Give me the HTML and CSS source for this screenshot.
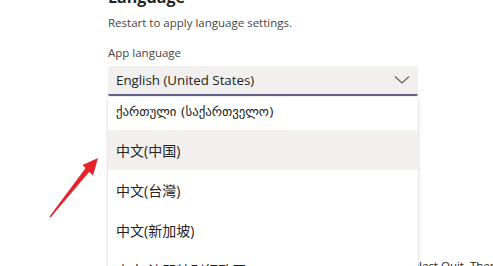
FILE: index.html
```html
<!DOCTYPE html>
<html>
<head>
<meta charset="utf-8">
<link rel="stylesheet" href="styles.css">
</head>
<body>
<div class="page">
  <h2 class="heading">Language</h2>
  <p class="hint">Restart to apply language settings.</p>
  <label class="label">App language</label>
  <div class="field">
    <div class="select">
      <span class="value">English (United States)</span>
      <svg class="chevron" width="16" height="16" viewBox="0 0 16 16"><path d="M1 4.5 L8 11 L15 4.5" fill="none" stroke="#605e5c" stroke-width="1.1"/></svg>
    </div>
    <div class="menu">
      <div class="menu-inner">
        <div class="opt geo">ქართული (საქართველო)</div>
        <div class="opt sel">中文(中国)</div>
        <div class="opt">中文(台灣)</div>
        <div class="opt">中文(新加坡)</div>
        <div class="opt">中文(澳門特別行政區)</div>
      </div>
    </div>
  </div>
  <p class="note"><span class="hidden-part">To restart, right-click the Teams icon in the taskbar, se</span>lect Quit. Then reopen Teams.</p>
</div>
<svg class="arrow" width="110" height="230" viewBox="0 0 110 230">
  <polygon points="49.5,216.5 50.5,217.5 90,171 86,167.5" fill="#e3242b"/>
  <polygon points="98,158 82.5,165 93,175.5" fill="#e3242b"/>
</svg>
</body>
</html>
```
FILE: styles.css
```css
html, body {
  margin: 0;
  padding: 0;
  background: #ffffff;
  overflow: hidden;
  height: 266px;
}
body {
  font-family: "Open Sans", "Noto Sans", sans-serif;
  color: #252423;
}
.page {
  padding-left: 108px;
  width: 385px;
  margin-top: -13px;
}
.heading {
  margin: 0;
  font-size: 16px;
  font-weight: 700;
  line-height: 20px;
}
.hint {
  margin: 8px 0 0;
  font-size: 11.5px;
  line-height: 16px;
  color: #484644;
}
.label {
  display: block;
  margin-top: 14px;
  font-size: 11.5px;
  line-height: 16px;
  color: #484644;
}
.field {
  position: relative;
  margin-top: 5px;
  width: 310px;
}
.select {
  box-sizing: border-box;
  height: 30px;
  background: #f1f0ef;
  border-bottom: 2px solid #63618a;
  border-radius: 3px 3px 2px 2px;
  display: flex;
  align-items: center;
  justify-content: space-between;
  padding: 0 8px 0 8px;
}
.value {
  font-size: 13.3px;
  line-height: 20px;
  color: #252423;
}
.menu {
  position: absolute;
  left: 0;
  top: 31px;
  width: 310px;
  height: 200px;
  background: #ffffff;
  box-shadow: 0 0 2px rgba(0,0,0,0.18), 0 2px 6px rgba(0,0,0,0.08);
  overflow: hidden;
}
.menu-inner {
  margin-top: -7px;
}
.opt {
  height: 40px;
  display: flex;
  align-items: center;
  padding-left: 8px;
  font-family: "Open Sans", "Noto Sans CJK SC", sans-serif;
  font-size: 14px;
  color: #252423;
}
.opt.geo {
  font-family: "DejaVu Sans", sans-serif;
  font-size: 12.8px;
  padding-top: 3px;
  box-sizing: border-box;
}
.opt.sel {
  background: #f1f0ef;
}
.note {
  margin: 162px 0 0;
  font-size: 11.5px;
  line-height: 16px;
  white-space: nowrap;
  color: #252423;
}
.hidden-part {
  display: inline-block;
  width: 311px;
  overflow: hidden;
  text-align: right;
  direction: rtl;
  vertical-align: bottom;
}
.arrow {
  position: absolute;
  left: 0;
  top: 0;
}
```
